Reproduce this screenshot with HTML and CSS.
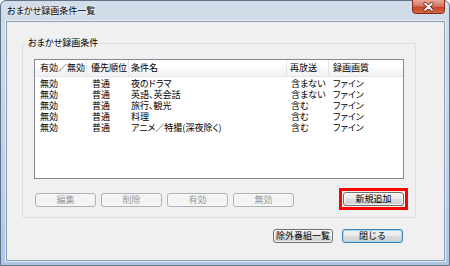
FILE: index.html
```html
<!DOCTYPE html>
<html lang="ja">
<head>
<meta charset="utf-8">
<link rel="stylesheet" href="styles.css">
</head>
<body>
<div class="window">
  <div class="titlebar">
    <span class="title">おまかせ録画条件一覧</span>
    <div class="close">
      <svg width="33" height="14" viewBox="0 0 33 14">
        <defs>
          <linearGradient id="cg" x1="0" y1="0" x2="0" y2="1">
            <stop offset="0" stop-color="#e9a99a"/>
            <stop offset="0.45" stop-color="#d7735d"/>
            <stop offset="0.55" stop-color="#c6452c"/>
            <stop offset="1" stop-color="#d96a45"/>
          </linearGradient>
        </defs>
        <path d="M0.5 0 V10.5 Q0.5 13.5 3.5 13.5 H29.5 Q32.5 13.5 32.5 10.5 V0" fill="url(#cg)" stroke="#7d2a1d"/>
        <path d="M13 3.5 L20 10 M20 3.5 L13 10" stroke="#5a1a10" stroke-width="3.2" stroke-linecap="round"/>
        <path d="M13 3.5 L20 10 M20 3.5 L13 10" stroke="#ffffff" stroke-width="1.8" stroke-linecap="round"/>
      </svg>
    </div>
  </div>
  <div class="client">
    <fieldset class="group">
      <legend class="group-label">おまかせ録画条件</legend>
      <div class="listview">
        <div class="lv-head lv-grid">
          <div class="cell">有効／無効</div>
          <div class="cell">優先順位</div>
          <div class="cell">条件名</div>
          <div class="cell">再放送</div>
          <div class="cell">録画画質</div>
        </div>
        <div class="lv-body">
          <div class="lv-grid lv-row"><div class="cell">無効</div><div class="cell">普通</div><div class="cell">夜のドラマ</div><div class="cell">含まない</div><div class="cell">ファイン</div></div>
          <div class="lv-grid lv-row"><div class="cell">無効</div><div class="cell">普通</div><div class="cell">英語、英会話</div><div class="cell">含まない</div><div class="cell">ファイン</div></div>
          <div class="lv-grid lv-row"><div class="cell">無効</div><div class="cell">普通</div><div class="cell">旅行、観光</div><div class="cell">含む</div><div class="cell">ファイン</div></div>
          <div class="lv-grid lv-row"><div class="cell">無効</div><div class="cell">普通</div><div class="cell">料理</div><div class="cell">含む</div><div class="cell">ファイン</div></div>
          <div class="lv-grid lv-row"><div class="cell">無効</div><div class="cell">普通</div><div class="cell">アニメ／特撮(深夜除く)</div><div class="cell">含む</div><div class="cell">ファイン</div></div>
        </div>
      </div>
      <div class="btn-row">
        <button class="btn" disabled>編集</button>
        <button class="btn" disabled>削除</button>
        <button class="btn" disabled>有効</button>
        <button class="btn" disabled>無効</button>
        <div class="spacer"></div>
        <div class="highlight">
          <button class="btn">新規追加</button>
        </div>
      </div>
    </fieldset>
    <div class="footer">
      <button class="btn btn-wide">除外番組一覧</button>
      <button class="btn default">閉じる</button>
    </div>
  </div>
</div>
</body>
</html>
```
FILE: styles.css
```css
html, body {
  margin: 0;
  padding: 0;
}
body {
  width: 450px;
  height: 266px;
  overflow: hidden;
  background: #ffffff;
  font-family: "Noto Sans CJK JP", "Noto Sans", sans-serif;
  font-size: 9px;
  color: #000;
}
.window {
  box-sizing: border-box;
  width: 450px;
  height: 266px;
  display: flex;
  flex-direction: column;
  padding: 0 4px 4px 5px;
  border: 1px solid #5f7287;
  border-radius: 6px 6px 0 0;
  background: linear-gradient(#d3dde9 0%, #c9d7e7 30%, #bcd0e8 70%, #adc6e6 100%);
}
.titlebar {
  height: 20px;
  display: flex;
  justify-content: space-between;
  align-items: flex-start;
}
.title {
  padding: 4px 0 0 1px;
  line-height: 12px;
  color: #000;
  font-feature-settings: "palt";
  text-shadow: 0 0 4px #ffffff, 0 0 2px #ffffff;
}
.close {
  width: 33px;
  height: 14px;
  margin-top: -1px;
  line-height: 0;
}
.client {
  flex: 1;
  display: flex;
  flex-direction: column;
  background: #f0f0f0;
  border: 1px solid #8a9db3;
  box-shadow: 0 0 0 1px rgba(255,255,255,0.6);
}
.group {
  box-sizing: border-box;
  margin: 15px 28px 0 15px;
  padding: 10px 11px 10px 11px;
  border: 1px solid #d5dfe5;
  border-radius: 3px;
  min-width: 0;
}
.group-label {
  margin-left: -8px;
  padding: 0 2px;
  line-height: 12px;
  color: #000;
  font-feature-settings: "palt";
}
.listview {
  box-sizing: border-box;
  height: 120px;
  border: 1px solid #828790;
  background: #ffffff;
  display: flex;
  flex-direction: column;
}
.lv-grid {
  display: grid;
  grid-template-columns: 52px 42px 158px 42px 1fr;
}
.lv-head {
  box-sizing: border-box;
  height: 17px;
  line-height: 15px;
  background: linear-gradient(#ffffff 0%, #ffffff 50%, #f7f8f9 50%, #f1f2f4 100%);
  border-bottom: 1px solid #e5e5e5;
}
.lv-head .cell {
  box-sizing: border-box;
  border-right: 1px solid #e3e5e8;
}
.lv-head .cell:last-child {
  border-right: none;
}
.lv-body {
  padding-top: 1px;
}
.lv-row {
  height: 11px;
  line-height: 11px;
}
.cell {
  white-space: nowrap;
  overflow: hidden;
}
.lv-grid .cell:nth-child(1) { padding-left: 5px; }
.lv-grid .cell:nth-child(2) { padding-left: 4px; }
.lv-grid .cell:nth-child(3) { padding-left: 2px; }
.lv-grid .cell:nth-child(4) { padding-left: 3px; }
.lv-grid .cell:nth-child(5) { padding-left: 4px; }
.lv-row .cell:nth-child(2) { padding-left: 5px; }
.lv-row .cell:nth-child(4) { padding-left: 4px; }
.lv-row .cell:nth-child(3),
.lv-row .cell:nth-child(4),
.lv-row .cell:nth-child(5) {
  font-feature-settings: "palt";
}

.btn-row {
  display: flex;
  align-items: flex-start;
  gap: 5px;
  margin-top: 14px;
  padding-left: 1px;
}
.spacer {
  flex: 1;
}
.btn {
  box-sizing: border-box;
  width: 61px;
  height: 14px;
  padding: 0;
  margin: 0;
  font-family: inherit;
  font-size: 9px;
  line-height: 12px;
  color: #000;
  border: 1px solid #707070;
  border-radius: 3px;
  background: linear-gradient(#f2f2f2 0%, #ebebeb 45%, #dddddd 50%, #cfcfcf 100%);
  box-shadow: inset 0 0 0 1px rgba(255,255,255,0.7);
}
.btn:disabled {
  color: #9a9a9a;
  border-color: #adb2b5;
  background: #f4f4f4;
  box-shadow: none;
}
.highlight {
  display: flex;
  padding: 1px;
  border: 3px solid #ff0000;
  margin: -5px -4px -4px 0;
}
.footer {
  display: flex;
  justify-content: flex-end;
  gap: 9px;
  margin-top: 11px;
  padding-right: 41px;
}
.btn-wide {
  width: 60px;
}
.default {
  border-color: #3c7fb1;
  box-shadow: inset 0 0 0 1px #9fdcf5;
}
```
